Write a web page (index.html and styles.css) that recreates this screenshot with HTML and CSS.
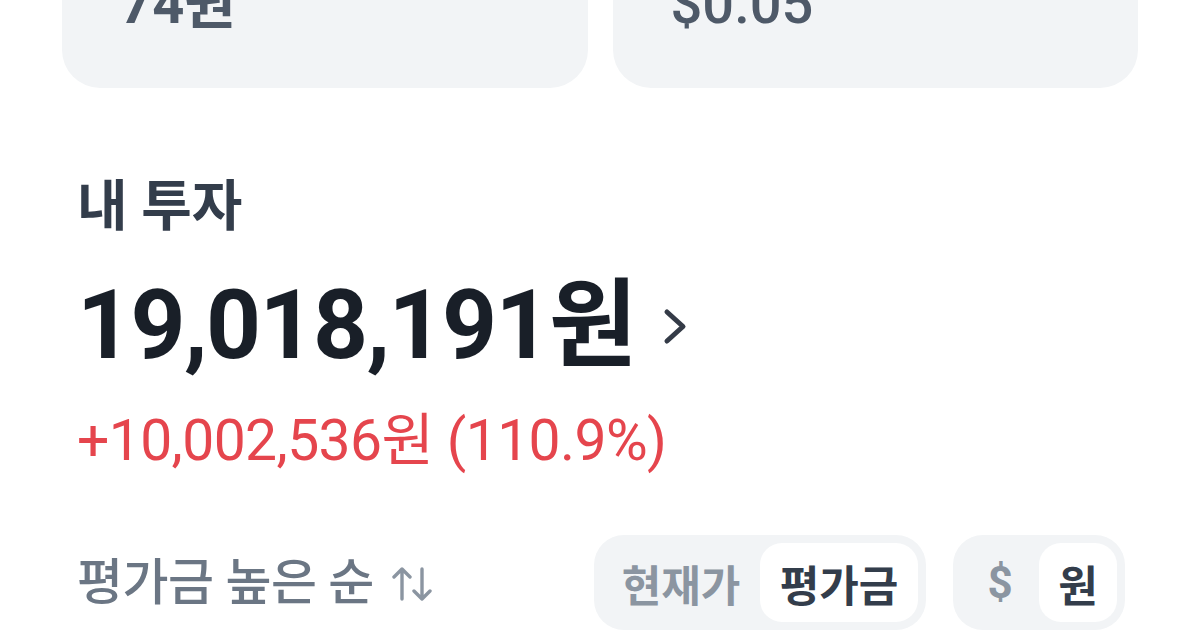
FILE: index.html
```html
<!DOCTYPE html>
<html lang="ko">
<head>
<meta charset="utf-8">
<title>내 투자</title>
<link rel="stylesheet" href="styles.css">
</head>
<body>
<div class="screen">
  <div class="cards">
    <div class="card"><div class="card-value bold">74원</div></div>
    <div class="card"><div class="card-value">$0.05</div></div>
  </div>

  <section class="invest">
    <h2 class="title">내 투자</h2>
    <div class="total">
      <span class="total-num">19,018,191원</span>
      <svg class="chev" width="24" height="37" viewBox="0 0 24 37"><path d="M4 4 L20 18.5 L4 33" fill="none" stroke="#343b47" stroke-width="5" stroke-linecap="round" stroke-linejoin="round"/></svg>
    </div>
    <div class="profit">+10,002,536원 (110.9%)</div>

    <div class="controls">
      <div class="sort">
        <span>평가금 높은 순</span>
        <svg class="sort-icon" width="40" height="34" viewBox="0 0 40 34">
          <g fill="none" stroke="#8b95a1" stroke-width="3.4" stroke-linecap="round" stroke-linejoin="round">
            <path d="M10 32 V2 M2 10 L10 2 L18 10"/>
            <path d="M30 2 V32 M22 24 L30 32 L38 24"/>
          </g>
        </svg>
      </div>
      <div class="toggles">
        <div class="seg seg-wide">
          <div class="seg-item">현재가</div>
          <div class="seg-item active">평가금</div>
        </div>
        <div class="seg seg-narrow">
          <div class="seg-item dollar">$</div>
          <div class="seg-item active">원</div>
        </div>
      </div>
    </div>
  </section>
</div>
</body>
</html>
```

FILE: styles.css
```css
html, body {
  margin: 0;
  padding: 0;
  background: #ffffff;
}
body {
  font-family: Roboto, "Noto Sans CJK KR", sans-serif;
  width: 1200px;
  height: 643px;
  overflow: hidden;
}
.screen {
  width: 1200px;
}
.cards {
  display: flex;
  gap: 25px;
  padding: 0 62px;
  height: 88px;
}
.card {
  flex: 1;
  background: #f2f4f6;
  border-radius: 0 0 38px 38px;
  padding: 0 0 0 58px;
  overflow: hidden;
}
.card-value {
  font-size: 56px;
  line-height: 56px;
  margin-top: -24px;
  color: #4e5968;
  font-weight: 500;
}
.card-value.bold {
  font-weight: 700;
}
.invest {
  padding: 0 77px;
}
.title {
  margin: 86px 0 0;
  font-size: 55px;
  line-height: 64px;
  font-weight: 700;
  color: #333d4b;
  letter-spacing: 0;
}
.total {
  margin-top: 32px;
  display: flex;
  align-items: center;
  gap: 27px;
  height: 110px;
}
.total-num {
  font-size: 96px;
  line-height: 110px;
  font-weight: 700;
  color: #191f28;
  letter-spacing: -1.6px;
}
.chev {
  margin-top: 2px;
}
.profit {
  margin-top: 26px;
  font-size: 57px;
  line-height: 70px;
  color: #e5454d;
  letter-spacing: -0.6px;
}
.controls {
  margin-top: 59px;
  display: flex;
  align-items: center;
  justify-content: space-between;
  margin-right: -2px;
}
.sort {
  display: flex;
  align-items: center;
  gap: 18px;
  font-size: 50px;
  line-height: 60px;
  color: #6b7684;
  font-weight: 500;
  letter-spacing: -0.5px;
}
.sort-icon {
  margin-top: 2px;
}
.toggles {
  display: flex;
  gap: 27px;
}
.seg {
  display: flex;
  background: #f2f4f6;
  border-radius: 30px;
  padding: 8px;
}
.seg-item {
  height: 79px;
  border-radius: 22px;
  display: flex;
  align-items: center;
  justify-content: center;
  font-size: 43px;
  font-weight: 700;
  color: #8b95a1;
}
.seg-wide .seg-item {
  width: 158px;
}
.seg-narrow .seg-item {
  width: 78px;
}
.seg-item.active {
  background: #ffffff;
  color: #333d4b;
}
.dollar {
  font-size: 44px;
}
```
